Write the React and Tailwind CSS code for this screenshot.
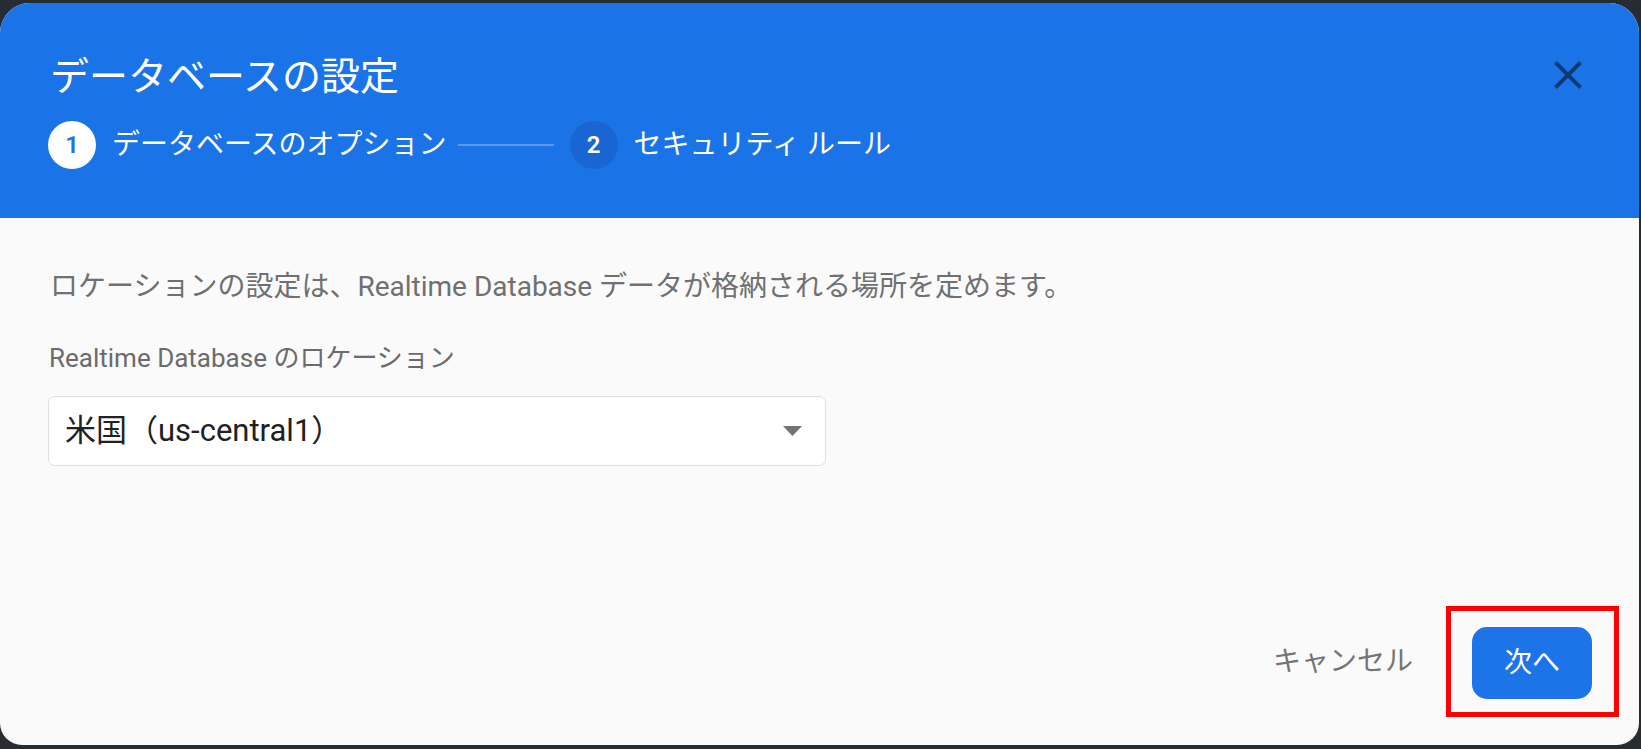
const font = { fontFamily: "Roboto, 'Noto Sans CJK JP', sans-serif" }

const steps = [
  { num: "1", label: "データベースのオプション", active: true },
  { num: "2", label: "セキュリティ ルール", active: false },
]

const CloseIcon = () => (
  <svg width="48" height="48" viewBox="0 0 24 24" className="fill-[#0d3a75]">
    <path d="M19 6.41L17.59 5 12 10.59 6.41 5 5 6.41 10.59 12 5 17.59 6.41 19 12 13.41 17.59 19 19 17.59 13.41 12z" />
  </svg>
)

const Step = ({ num, label, active }) => (
  <div className="flex items-center gap-4">
    <div
      className={
        active
          ? "w-12 h-12 rounded-full bg-white text-[#1b73e8] flex items-center justify-center text-[24px] font-semibold"
          : "w-12 h-12 rounded-full bg-[#1966d2] text-white flex items-center justify-center text-[24px] font-semibold"
      }
    >
      {num}
    </div>
    <span className="text-white text-[28px] leading-none">{label}</span>
  </div>
)

const App = () => {
  return (
    <div className="w-[1641px] h-[749px] bg-[#262c31] pt-[3px] overflow-hidden" style={font}>
      <div className="w-[1639px] h-[742px] rounded-t-[30px] rounded-b-[22px] bg-[#fafafa] overflow-hidden flex flex-col">
        <header className="bg-[#1b73e8] h-[215px] pl-12 pr-[47px] pt-[51px]">
          <div className="flex items-center justify-between">
            <h1 className="text-white text-[39px] leading-[46px] font-normal pl-[2px]">データベースの設定</h1>
            <button className="w-12 h-12 flex items-center justify-center -mt-[4px]">
              <CloseIcon />
            </button>
          </div>
          <div className="flex items-center mt-[21px]">
            <Step {...steps[0]} />
            <div className="w-24 h-[2px] bg-[#5e98ee] ml-[11px] mr-4"></div>
            <Step {...steps[1]} />
          </div>
        </header>

        <main className="flex-1 pl-12 pt-[51px]">
          <p className="text-[#707070] text-[28px] leading-[36px] pl-[2px]">
            ロケーションの設定は、Realtime Database データが格納される場所を定めます。
          </p>
          <label className="block mt-[36px] text-[#6b6b6b] text-[26px] leading-[34px] pl-[1px]">
            Realtime Database のロケーション
          </label>
          <div className="mt-[21px] w-[778px] h-[70px] bg-white border-[1.5px] border-[#dfdfdf] rounded-[7px] flex items-center justify-between pl-4 pr-[23px]">
            <span className="text-[#212121] text-[31px]">米国（us-central1）</span>
            <svg width="19" height="10" viewBox="0 0 19 10" className="fill-[#737373]">
              <path d="M0 0h19L9.5 10z" />
            </svg>
          </div>
        </main>

        <footer className="flex items-center justify-end pr-5 pb-[28px]">
          <button className="text-[#757575] text-[28px] leading-none mr-[33px]">キャンセル</button>
          <div className="border-[5px] border-[#ff0000] pl-[21px] pr-[22px] pt-[16px] pb-[13px]">
            <button className="w-[120px] h-[72px] rounded-[15px] bg-[#1d74e8] text-white text-[28px]">
              次へ
            </button>
          </div>
        </footer>
      </div>
    </div>
  )
}

export default App
